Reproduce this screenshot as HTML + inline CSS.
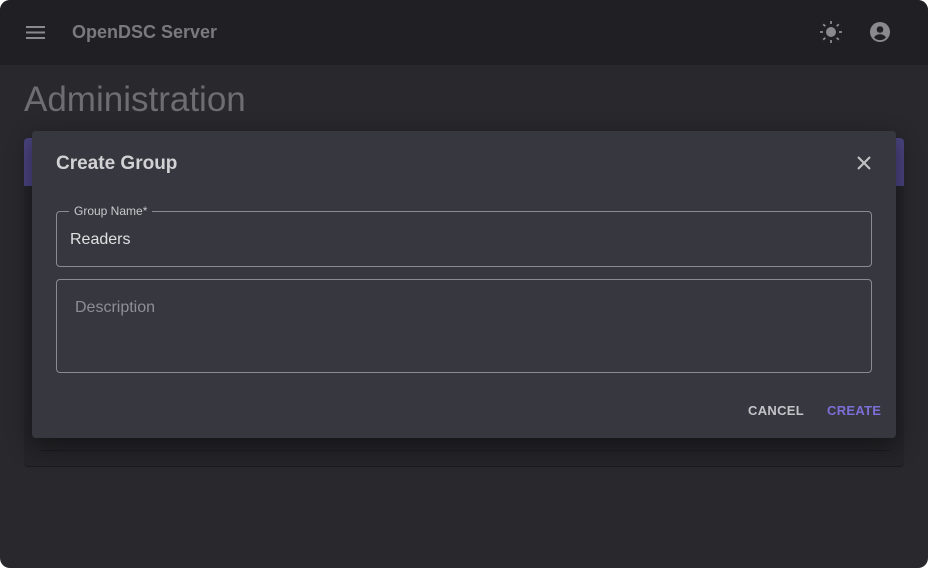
<!DOCTYPE html>
<html><head><style>
html,body{margin:0;padding:0;width:928px;height:568px;overflow:hidden;background:#fff}
*{box-sizing:border-box}
.win{position:absolute;left:0;top:0;width:928px;height:568px;background:#28282d;border-radius:10px;overflow:hidden;font-family:"Liberation Sans",Arial,sans-serif}
.bar{position:absolute;left:0;top:0;width:928px;height:65px;background:#202024}
.title{position:absolute;left:72px;top:22px;font-size:18px;font-weight:bold;color:#7a7a7e}
h1{position:absolute;left:24px;top:80px;margin:0;font-weight:normal;font-size:35px;color:#6e6e72}
.card{position:absolute;left:24px;top:138px;width:880px;height:329px;background:#252529;border-radius:4px;border-bottom:1px solid #1c1c1f}
.card .hd{height:48px;background:#4a4480;border-radius:4px 4px 0 0}
.inner{position:absolute;left:40px;top:438px;width:850px;height:13px;border-bottom:1px solid #1d1d20}
.dlg{position:absolute;left:32px;top:131px;width:864px;height:307px;background:#37373f;border-radius:4px;box-shadow:0 8px 24px rgba(0,0,0,.45)}
.dt{position:absolute;left:24px;top:22px;font-size:19px;font-weight:bold;color:#d2d2d4}
.f{position:absolute;border:1px solid #8a8a90;border-radius:4px}
.lab{position:absolute;left:12px;top:-8px;background:#37373f;padding:0 5px;font-size:12px;color:#c8c8cc}
.btn{position:absolute;top:272px;font-size:13px;font-weight:bold;letter-spacing:.3px}
</style></head><body><div class="win">
<div class="bar">
<svg style="position:absolute;left:26px;top:26px" width="20" height="14"><rect y="0" width="19" height="2" fill="#8a8a8e"/><rect y="5.5" width="19" height="2" fill="#8a8a8e"/><rect y="11" width="19" height="2" fill="#8a8a8e"/></svg>
<div class="title">OpenDSC Server</div>
<svg style="position:absolute;left:820px;top:21px" width="22" height="22" viewBox="0 0 22 22"><circle cx="11" cy="11" r="5" fill="#8a8a8e"/><g stroke="#8a8a8e" stroke-width="1.8"><line x1="11" y1="0" x2="11" y2="3"/><line x1="11" y1="19" x2="11" y2="22"/><line x1="0" y1="11" x2="3" y2="11"/><line x1="19" y1="11" x2="22" y2="11"/><line x1="3.2" y1="3.2" x2="5.3" y2="5.3"/><line x1="16.7" y1="16.7" x2="18.8" y2="18.8"/><line x1="3.2" y1="18.8" x2="5.3" y2="16.7"/><line x1="16.7" y1="5.3" x2="18.8" y2="3.2"/></g></svg>
<svg style="position:absolute;left:870px;top:22px" width="20" height="20" viewBox="0 0 20 20"><circle cx="10" cy="10" r="10" fill="#8a8a8e"/><circle cx="10" cy="7.5" r="3.3" fill="#202024"/><path d="M4 15.5c1.5-2.5 3.8-3.3 6-3.3s4.5.8 6 3.3c-1.6 1.8-3.7 2.6-6 2.6s-4.4-.8-6-2.6z" fill="#202024"/></svg>
</div>
<h1>Administration</h1>
<div class="card"><div class="hd"></div></div>
<div class="inner"></div>
<div class="dlg">
<div class="dt">Create Group</div>
<svg style="position:absolute;left:824px;top:24px" width="16" height="16"><path d="M2 2L14 14M14 2L2 14" stroke="#c4c4c8" stroke-width="2"/></svg>
<div class="f" style="left:24px;top:80px;width:816px;height:56px"><div class="lab">Group Name*</div><div style="position:absolute;left:13px;top:19px;font-size:16px;color:#e0e0e2">Readers</div></div>
<div class="f" style="left:24px;top:148px;width:816px;height:94px"><div style="position:absolute;left:18px;top:19px;font-size:16px;color:#8e8e94">Description</div></div>
<div class="btn" style="left:716px;color:#c4c4c8">CANCEL</div>
<div class="btn" style="left:795px;color:#7b6fd8">CREATE</div>
</div>
</div></body></html>
